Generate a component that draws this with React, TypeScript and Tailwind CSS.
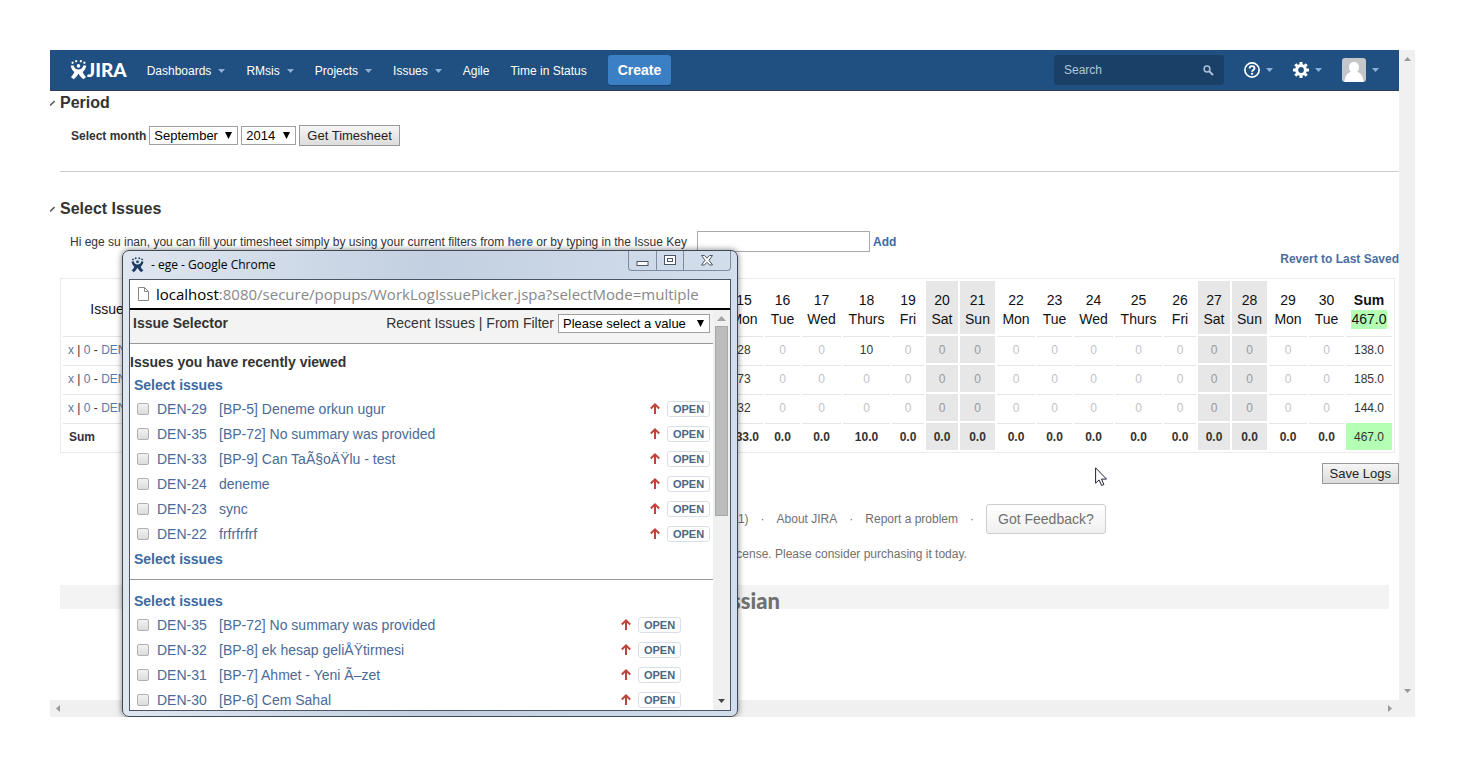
import React from 'react';

interface Issue {
  key: string;
  summary: string;
}

interface IssueListProps {
  id: string;
  issues: Issue[];
  inset?: boolean;
}

interface DropdownProps {
  id: string;
  label?: string;
  value: string;
  className: string;
}

const weekDays = ['Mon', 'Tue', 'Wed', 'Thurs', 'Fri', 'Sat', 'Sun'];

const dayWidths: Record<string, string> = {
  Mon: 'w-[38px]',
  Tue: 'w-[35px]',
  Wed: 'w-[39px]',
  Thurs: 'w-[47px]',
  Fri: 'w-[32px]',
  Sat: 'w-[32px]',
  Sun: 'w-[35px]',
};

const days = Array.from({ length: 30 }, (_, i) => ({
  date: i + 1,
  name: weekDays[i % 7],
  weekend: i % 7 > 4,
}));

const worklogs: { key: string; hours: Record<number, number>; sum: string }[] = [
  { key: 'DEN-29', hours: { 15: 28, 18: 10 }, sum: '138.0' },
  { key: 'DEN-35', hours: { 15: 73 }, sum: '185.0' },
  { key: 'DEN-33', hours: { 15: 32 }, sum: '144.0' },
];

const daySums: Record<number, string> = { 15: '133.0', 18: '10.0' };

const recentIssues: Issue[] = [
  { key: 'DEN-29', summary: '[BP-5] Deneme orkun ugur' },
  { key: 'DEN-35', summary: '[BP-72] No summary was provided' },
  { key: 'DEN-33', summary: '[BP-9] Can TaÃ§oÄŸlu - test' },
  { key: 'DEN-24', summary: 'deneme' },
  { key: 'DEN-23', summary: 'sync' },
  { key: 'DEN-22', summary: 'frfrfrfrf' },
];

const otherIssues: Issue[] = [
  { key: 'DEN-35', summary: '[BP-72] No summary was provided' },
  { key: 'DEN-32', summary: '[BP-8] ek hesap geliÅŸtirmesi' },
  { key: 'DEN-31', summary: '[BP-7] Ahmet - Yeni Ã–zet' },
  { key: 'DEN-30', summary: '[BP-6] Cem Sahal' },
];

const navItems = [
  { label: 'Dashboards', menu: true },
  { label: 'RMsis', menu: true },
  { label: 'Projects', menu: true },
  { label: 'Issues', menu: true },
  { label: 'Agile', menu: false },
  { label: 'Time in Status', menu: false },
];

const Caret: React.FC = () => (
  <svg width="7" height="4" viewBox="0 0 7 4" className="shrink-0 fill-[#8fb0d6]">
    <path d="M0 0h7L3.5 4z" />
  </svg>
);

const JiraMark: React.FC<{ className: string }> = ({ className }) => (
  <svg viewBox="0 0 16 19" className={className} fill="currentColor">
    <circle cx="2.4" cy="2.6" r="1.1" />
    <circle cx="5.8" cy="1.2" r="1.1" />
    <circle cx="10.2" cy="1.2" r="1.1" />
    <circle cx="13.6" cy="2.6" r="1.1" />
    <circle cx="8" cy="5.6" r="1.7" />
    <path d="M.6 5.4l2.600-.5C4 7.600 5.700 9 8 9s4-1.400 4.800-4.100l2.600.5c-.6 2.700-1.800 4.700-3.500 6.100.9 2 2 3.500 3.300 4.600l-2.600 2.200c-1.900-1.400-3.400-3.200-4.600-5.500-1.200 2.300-2.700 4.100-4.600 5.500L.8 16.100c1.300-1.100 2.400-2.600 3.300-4.600C2.400 10.100 1.200 8.100.6 5.400z" />
  </svg>
);

const Collapser: React.FC = () => (
  <svg width="5" height="7" viewBox="0 0 5 7" className="mr-[5px] shrink-0">
    <path d="M0 5.5L4.6 1" fill="none" stroke="#555" strokeWidth="1.6" />
  </svg>
);

const Dropdown: React.FC<DropdownProps> = ({ id, label, value, className }) => (
  <span className="relative flex items-center">
    <select
      id={id}
      aria-label={label}
      defaultValue={value}
      className={`h-[19px] appearance-none border border-[#a0a0a0] bg-white pl-1 text-[13px] leading-4 text-black ${className}`}
    >
      <option>{value}</option>
    </select>
    <svg width="7" height="7" viewBox="0 0 7 7" className="pointer-events-none absolute right-1.5">
      <path d="M0 0h7L3.5 7z" />
    </svg>
  </span>
);

const PlainButton: React.FC<{ children: React.ReactNode }> = ({ children }) => (
  <button className="h-[21px] border border-[#999] bg-linear-to-b from-[#f6f6f6] to-[#dcdcdc] px-[7px] text-[13px] leading-4 text-[#222]">
    {children}
  </button>
);

const Header: React.FC = () => (
  <header className="flex h-[41px] items-center border-b border-[#2e3d54] bg-[#205081] px-5 text-xs text-white">
    <a href="#" className="mr-5 flex items-center">
      <JiraMark className="h-5 w-[17px]" />
      <span className="font-[Lato] text-[19px] leading-5 font-black">JIRA</span>
    </a>
    <nav className="flex items-center gap-[21px] pt-px">
      {navItems.map(item => (
        <a key={item.label} href="#" className="flex items-center gap-[7px] whitespace-nowrap">
          {item.label}
          {item.menu && <Caret />}
        </a>
      ))}
    </nav>
    <button className="ml-[21px] h-[30px] rounded-[3px] bg-[#3b7fc4] px-2.5 text-sm font-bold shadow-[0_1px_0_#1a4270]">
      Create
    </button>
    <div className="ml-auto flex h-[30px] w-[170px] items-center rounded-[3px] bg-[#1b4067] px-2.5">
      <input
        type="text"
        aria-label="Search"
        placeholder="Search"
        className="w-0 flex-1 bg-transparent placeholder:text-[#b5c6da]"
      />
      <svg width="11" height="11" viewBox="0 0 11 11" fill="none" stroke="#a9bfd8" strokeWidth="1.5">
        <circle cx="4" cy="4" r="2.9" />
        <path d="M6.2 6.2L10 10" strokeWidth="2" />
      </svg>
    </div>
    <button aria-label="Help" className="ml-5 flex items-center gap-1.5">
      <svg width="16" height="16" viewBox="0 0 16 16" fill="none" stroke="#fff" strokeWidth="1.7">
        <circle cx="8" cy="8" r="7.1" />
        <path d="M5.6 6.5c0-1.500 1-2.400 2.500-2.400s2.400.8 2.400 2.100c0 1.800-2.400 1.800-2.400 3.500" strokeWidth="1.9" />
        <path d="M8.1 10.8v1.9" strokeWidth="2" />
      </svg>
      <Caret />
    </button>
    <button aria-label="Administration" className="ml-5 flex items-center gap-1.5">
      <svg width="16" height="16" viewBox="0 0 16 16" fill="none" stroke="#fff">
        <circle cx="8" cy="8" r="4.4" strokeWidth="3" />
        <path
          d="M8 0v3M8 13v3M0 8h3M13 8h3M2.300 2.300l2.200 2.200M11.500 11.500l2.200 2.200M2.300 13.700l2.200-2.200M11.500 4.500l2.200-2.200"
          strokeWidth="3"
        />
      </svg>
      <Caret />
    </button>
    <button aria-label="Profile" className="ml-5 flex items-center gap-1.5">
      <svg width="24" height="24" viewBox="0 0 24 24">
        <rect width="24" height="24" rx="3" fill="#c4c6c9" />
        <path d="M12 4c3 0 5 2.200 5 5.200 0 2-.8 3.600-2 4.600 3.600 1 6 4 6.600 10.200H2.400C3 17.800 5.400 14.800 9 13.800c-1.200-1-2-2.600-2-4.600C7 6.200 9 4 12 4z" fill="#fff" />
      </svg>
      <Caret />
    </button>
  </header>
);

const Timesheet: React.FC = () => (
  <table className="mt-[11px] w-full table-fixed border-separate border-spacing-[2px] border border-[#ebebeb] text-center text-xs text-[#333]">
    <colgroup>
      <col />
      {days.map(day => (
        <col key={day.date} className={dayWidths[day.name]} />
      ))}
      <col className="w-[46px]" />
    </colgroup>
    <thead>
      <tr className="h-[53px] text-sm leading-[19px] text-[#111]">
        <th className="p-0 pt-1 font-normal">Issue Key</th>
        {days.map(day => (
          <th key={day.date} className={`p-0 pt-1 font-normal ${day.weekend ? 'bg-[#e7e7e7]' : ''}`}>
            {day.date}
            <br />
            {day.name}
          </th>
        ))}
        <th className="p-0 pt-1">
          Sum
          <span className="mx-auto block w-9 bg-[#b3ffb3] font-normal">467.0</span>
        </th>
      </tr>
    </thead>
    <tbody>
      {worklogs.map(log => (
        <tr key={log.key} className="h-[27px]">
          <td className="border-t border-[#e5e5e5] p-0 pl-[5px] text-left">
            <a href="#" className="text-[#5a7aa5]">x</a> | <a href="#" className="text-[#5a7aa5]">0</a> -{' '}
            <a href="#" className="text-[#5a7aa5]">{log.key}</a>
          </td>
          {days.map(day => (
            <td
              key={day.date}
              className={`border-t border-[#e5e5e5] p-0 ${day.weekend ? 'bg-[#e7e7e7]' : ''} ${
                log.hours[day.date] ? '' : day.weekend ? 'text-[#999]' : 'text-[#c4c4c4]'
              }`}
            >
              {log.hours[day.date] ?? 0}
            </td>
          ))}
          <td className="border-t border-[#e5e5e5] p-0">{log.sum}</td>
        </tr>
      ))}
      <tr className="h-[27px] font-bold">
        <td className="border-t border-[#e5e5e5] p-0 pl-1.5 text-left">Sum</td>
        {days.map(day => (
          <td key={day.date} className={`border-t border-[#e5e5e5] p-0 ${day.weekend ? 'bg-[#e7e7e7]' : ''}`}>
            {daySums[day.date] ?? '0.0'}
          </td>
        ))}
        <td className="border-t border-[#b3ffb3] bg-[#b3ffb3] p-0 font-normal">467.0</td>
      </tr>
    </tbody>
  </table>
);

const Footer: React.FC = () => (
  <footer className="mt-5 text-center text-xs leading-4 text-[#707070]">
    <div className="flex items-center justify-center whitespace-nowrap">
      <span>Atlassian JIRA Project Management Software (v6.3.1#6329-sha1:7df7611)</span>
      <span className="w-7">·</span>
      <a href="#">About JIRA</a>
      <span className="w-7">·</span>
      <a href="#">Report a problem</a>
      <span className="w-7">·</span>
      <button className="h-[30px] rounded-[3px] border border-[#ccc] bg-linear-to-b from-white to-[#f0f0f0] px-[11px] text-sm">
        Got Feedback?
      </button>
    </div>
    <p className="mt-3">
      Powered by a free Atlassian JIRA evaluation license. Please consider purchasing it today.
    </p>
    <div className="mt-[23px] mr-[10px] h-6 bg-[#f3f3f3] pl-[22px]">
      <a href="#" className="font-[Lato] text-[22px] leading-[31px] font-black">Atlassian</a>
    </div>
  </footer>
);

const IssueList: React.FC<IssueListProps> = ({ id, issues, inset }) => (
  <ul className="text-[#4a6a98]">
    {issues.map(issue => (
      <li key={issue.key} className={`flex h-[25px] items-center pl-[7px] ${inset ? 'pr-8' : 'pr-[3px]'}`}>
        <input
          type="checkbox"
          id={`${id}-${issue.key}`}
          className="mr-2 size-3 appearance-none rounded-xs border border-[#b0b0b0] bg-linear-to-b from-[#f2f2f2] to-[#dcdcdc]"
        />
        <label htmlFor={`${id}-${issue.key}`} className="w-[62px]">{issue.key}</label>
        <a href="#">{issue.summary}</a>
        <svg width="10" height="11" viewBox="0 0 10 11" className="mr-[7px] ml-auto" fill="none" stroke="#c0433a" strokeWidth="2">
          <path d="M5 11V1.500M.8 5.500L5 1.400l4.200 4.100" />
        </svg>
        <span className="h-4 w-[43px] rounded-[3px] border border-[#d8dfe8] text-center text-[11px] leading-[15px] font-bold text-[#4a6785]">
          OPEN
        </span>
      </li>
    ))}
  </ul>
);

const SelectIssues: React.FC = () => (
  <a href="#" className="block pl-1 leading-[22px] font-bold text-[#3b6a9e]">Select issues</a>
);

const IssuePicker: React.FC = () => (
  <div className="absolute top-[200px] bottom-0 left-[72px] flex w-[616px] flex-col rounded-[7px] border border-[#3f4a58] bg-linear-to-r from-[#dfe6f0] via-[#c3d0e1] to-[#d3deec] px-1.5 pb-[5px] shadow-[0_0_6px_rgba(0,0,0,0.5)]">
    <div className="flex h-7 shrink-0 items-center pl-0.5 font-['Open_Sans'] text-xs text-black">
      <JiraMark className="mr-[7px] h-4 w-[13px] text-[#1d3c63]" />
      <span>- ege - Google Chrome</span>
      <div className="ml-auto flex h-5 self-start rounded-b border border-t-0 border-[#7d8ca0] text-[#4b5563]">
        <button aria-label="Minimize" className="flex w-7 items-center justify-center border-r border-[#7d8ca0]">
          <svg width="13" height="12" viewBox="0 0 13 12">
            <rect x="1" y="6.5" width="11" height="4" fill="#fff" stroke="currentColor" />
          </svg>
        </button>
        <button aria-label="Maximize" className="flex w-[27px] items-center justify-center border-r border-[#7d8ca0]">
          <svg width="12" height="11" viewBox="0 0 12 11" fill="#fff" stroke="currentColor">
            <rect x=".5" y=".5" width="11" height="9" />
            <rect x="3.5" y="3.5" width="5" height="3" />
          </svg>
        </button>
        <button aria-label="Close" className="flex w-[46px] items-center justify-center">
          <svg width="12" height="11" viewBox="0 0 12 11">
            <path
              d="M.5.5h3L6 3.200 8.500.5h3L8 5.300l3.500 4.700h-3L6 7.300 3.500 10h-3L4 5.300z"
              fill="#fff"
              stroke="currentColor"
            />
          </svg>
        </button>
      </div>
    </div>
    <div className="flex min-h-0 flex-1 flex-col border border-[#4b5563] bg-white">
      <div className="flex h-[30px] shrink-0 items-center border-b-2 border-black pl-2 font-['Open_Sans'] text-[15px] text-[#888]">
        <svg width="11" height="14" viewBox="0 0 11 14" fill="none" stroke="#888" className="mr-[7px]">
          <path d="M.5.5h6l4 4v9H.5zM6.500.5v4h4" />
        </svg>
        <span className="whitespace-nowrap">
          <span className="text-black">localhost</span>:8080/secure/popups/WorkLogIssuePicker.jspa?selectMode=multiple
        </span>
      </div>
      <div className="flex min-h-0 flex-1 text-sm text-[#333]">
        <div className="min-w-0 flex-1 overflow-hidden">
          <div className="flex h-[34px] items-start border-b border-[#999] bg-[#f3f3f3] px-[3px] pt-1">
            <h1 className="leading-[19px] font-bold">Issue Selector</h1>
            <label htmlFor="filter" className="mr-1 ml-auto leading-[19px]">
              <a href="#">Recent Issues</a> | From Filter
            </label>
            <Dropdown id="filter" value="Please select a value" className="w-[152px]" />
          </div>
          <h2 className="mt-[7px] leading-[23px] font-bold">Issues you have recently viewed</h2>
          <SelectIssues />
          <IssueList id="recent" issues={recentIssues} />
          <div className="mt-0.5">
            <SelectIssues />
          </div>
          <hr className="mt-[9px] mb-[10px] border-[#999]" />
          <SelectIssues />
          <IssueList id="other" issues={otherIssues} inset />
        </div>
        <div className="flex w-[17px] flex-col items-center bg-[#f0f0f0]">
          <svg width="9" height="16" viewBox="0 0 9 16" fill="#a3a3a3">
            <path d="M0 11h9L4.500 6z" />
          </svg>
          <div className="h-[190px] w-[13px] border border-[#a8a8a8] bg-[#bcbcbc]" />
          <svg width="7" height="16" viewBox="0 0 7 16" fill="#444" className="mt-auto">
            <path d="M0 5h7L3.500 9z" />
          </svg>
        </div>
      </div>
    </div>
  </div>
);

const App: React.FC = () => {
  return (
    <div className="h-screen bg-white p-[50px] font-['Liberation_Sans',Arial,sans-serif]">
      <div className="relative flex h-full flex-col overflow-hidden">
        <div className="flex min-h-0 flex-1">
          <div className="min-w-0 flex-1 overflow-hidden">
            <Header />
            <main className="text-xs text-[#333]">
              <h2 className="flex items-center text-base leading-6 font-bold">
                <Collapser />
                Period
              </h2>
              <div className="mt-[10px] ml-[21px] flex items-center gap-[3px]">
                <label htmlFor="month" className="font-bold">Select month</label>
                <Dropdown id="month" value="September" className="w-[89px]" />
                <Dropdown id="year" label="Year" value="2014" className="w-[55px]" />
                <PlainButton>Get Timesheet</PlainButton>
              </div>
              <hr className="my-[25px] ml-[10px] border-[#ccc]" />
              <h2 className="flex items-center text-base leading-6 font-bold">
                <Collapser />
                Select Issues
              </h2>
              <div className="mt-[10px] ml-5 flex items-center whitespace-nowrap">
                <label htmlFor="issue-key">
                  Hi ege su inan, you can fill your timesheet simply by using your current filters from{' '}
                  <a href="#" className="font-bold text-[#3b6aa8]">here</a> or by typing in the Issue Key
                </label>
                <input
                  id="issue-key"
                  type="text"
                  className="mr-[3px] ml-[10px] h-[21px] w-[173px] border border-[#a9a9a9] bg-white"
                />
                <a href="#" className="font-bold text-[#3b6aa8]">Add</a>
              </div>
              <div className="text-right leading-[15px]">
                <a href="#" className="font-bold text-[#4a6f9f]">Revert to Last Saved</a>
              </div>
              <div className="ml-[10px]">
                <div className="pr-1">
                  <Timesheet />
                </div>
                <div className="mt-[10px] flex justify-end">
                  <PlainButton>Save Logs</PlainButton>
                </div>
                <Footer />
              </div>
            </main>
          </div>
          <div className="flex w-4 flex-col items-center justify-between bg-[#f0f0f0]">
            <svg width="7" height="17" viewBox="0 0 7 17" fill="#999">
              <path d="M0 11h7L3.500 7z" />
            </svg>
            <svg width="7" height="17" viewBox="0 0 7 17" fill="#999">
              <path d="M0 6h7L3.500 10z" />
            </svg>
          </div>
        </div>
        <div className="flex h-[17px] items-center justify-between bg-[#f0f0f0] pr-[23px] pl-1.5">
          <svg width="4" height="7" viewBox="0 0 4 7" fill="#999">
            <path d="M4 0v7L0 3.500z" />
          </svg>
          <svg width="4" height="7" viewBox="0 0 4 7" fill="#999">
            <path d="M0 0v7l4-3.500z" />
          </svg>
        </div>
        <IssuePicker />
        <svg width="13" height="20" viewBox="0 0 13 20" className="absolute top-[417px] left-[1045px]">
          <path d="M.6.8v15.400l3.500-3.300 2.500 5.600 2.300-1-2.400-5.400h5z" fill="#fff" stroke="#223" />
        </svg>
      </div>
    </div>
  );
};

export default App;
